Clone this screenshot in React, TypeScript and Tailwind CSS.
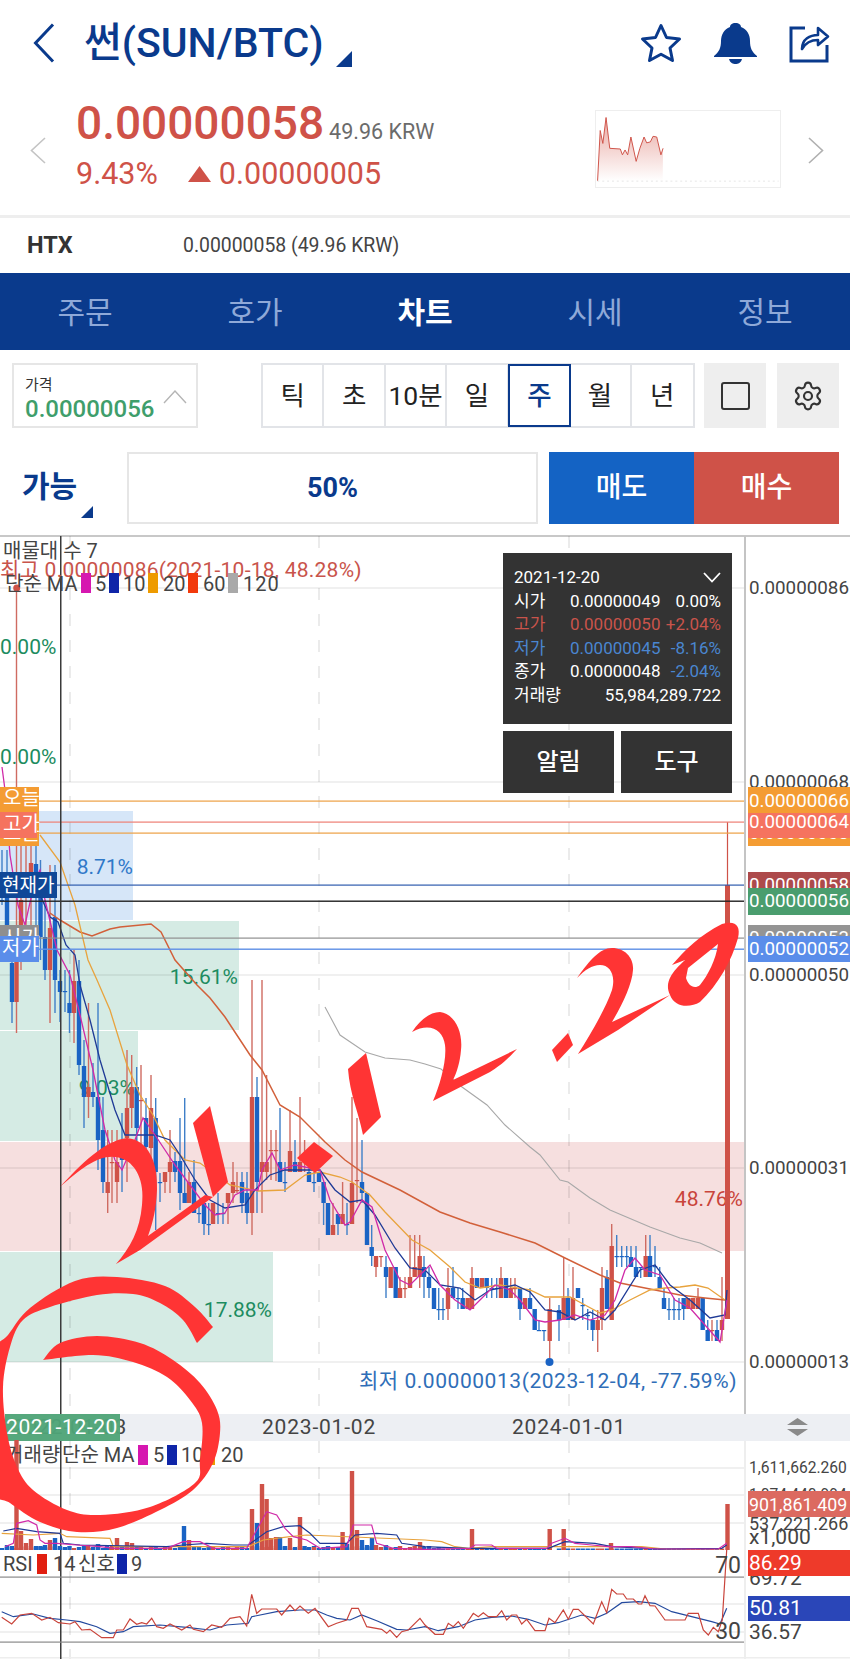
import React from "react";
import { Settings } from "lucide-react";

type P = [number, number];
const NAVY = "#0a3a8c";
const RED = "#cf5248";
const BLUE = "#1a63c4";
const HAND = "#ff3434";

const line = (p: P[]) => "M" + p.map((q) => `${q[0].toFixed(1)},${q[1].toFixed(1)}`).join("L");
const z7 = (p: number[][]): P[] => p.map(([a, b]) => [a / 3, 1400 + b / 3]);
const z8 = (p: number[][]): P[] => p.map(([a, b]) => [425 + a / 3, 1400 + b / 3]);

// open smooth curve (Catmull-Rom), continuing from the current point
const curve = (p: P[]) => {
  const n = p.length;
  let d = "";
  for (let i = 0; i < n - 1; i++) {
    const a = p[Math.max(i - 1, 0)], b = p[i], c = p[i + 1], e = p[Math.min(i + 2, n - 1)];
    const c1: P = [b[0] + (c[0] - a[0]) / 6, b[1] + (c[1] - a[1]) / 6];
    const c2: P = [c[0] - (e[0] - b[0]) / 6, c[1] - (e[1] - b[1]) / 6];
    d += `C${c1[0].toFixed(1)},${c1[1].toFixed(1)} ${c2[0].toFixed(1)},${c2[1].toFixed(1)} ${c[0]},${c[1]}`;
  }
  return d;
};

const CANDLES: number[][] = [
  [2,900,901,850,905,0],[7,893,925,850,935,0],[12,963,1002,940,1023,0],[16.5,962,1002,590,1033,1],[21,900,925,820,970,1],
  [26,880,890,820,950,1],[31,863,883,820,925,1],[36,864,883,830,925,0],[40.5,893,937,860,960,0],[45,937,970,900,980,0],
  [50,928,970,865,1023,1],[55,917,980,865,1013,0],[60,981,992,970,1022,0],[65,991,992,970,1012,0],[69.5,1003,1013,970,1033,0],
  [74,981,1013,950,1043,1],[79,981,1065,960,1075,0],[84,1066,1097,1040,1128,0],[88.5,1087,1097,1003,1118,1],[93,1092,1097,1063,1107,0],
  [98,1097,1140,1003,1170,0],[103,1130,1182,1097,1193,0],[107.7,1182,1193,1130,1213,1],[112,1162,1163,1130,1203,1],[117,1162,1182,1130,1203,1],
  [122,1157,1160,1113,1192,0],[127,1108,1138,1050,1182,1],[131.7,1087,1108,1055,1128,1],[136.7,1087,1128,1067,1150,0],[141,1100,1101,1065,1145,1],
  [146,1118,1147,1098,1165,0],[151,1108,1148,1075,1160,1],[155.7,1118,1172,1098,1230,0],[160,1182,1183,1173,1202,0],[165,1172,1182,1172,1193,1],
  [170,1162,1172,1130,1193,1],[175,1161,1172,1152,1182,0],[180,1161,1193,1118,1210,0],[184.7,1193,1203,1098,1203,0],[189,1182,1203,1172,1203,1],
  [194,1182,1213,1160,1213,0],[199,1213,1214,1203,1223,0],[204,1203,1224,1203,1235,0],[208.7,1224,1225,1203,1235,0],[213,1203,1224,1203,1224,1],
  [218,1213,1214,1193,1224,0],[223,1213,1214,1203,1224,0],[228,1193,1203,1193,1224,1],[233,1182,1193,1162,1203,1],[237,1190,1191,1172,1193,1],
  [242,1182,1203,1172,1213,0],[247,1193,1213,1172,1224,0],[252,1097,1213,980,1235,1],[257,1097,1182,1077,1213,0],[262,1162,1172,980,1213,1],
  [266.6,1162,1172,1075,1180,1],[271,1150,1151,1130,1180,1],[276,1150,1151,1130,1181,1],[280,1162,1182,1108,1182,0],[285,1182,1183,1162,1192,0],
  [290,1151,1172,1110,1172,1],[295,1162,1172,1140,1172,0],[300,1162,1172,1097,1172,1],[304.6,1160,1161,1140,1172,1],[309,1172,1182,1160,1182,0],
  [314,1182,1183,1172,1192,0],[319,1172,1182,1172,1182,0],[323.6,1182,1203,1182,1225,0],[328,1203,1235,1203,1235,0],[333,1225,1235,1203,1235,1],
  [338,1214,1224,1214,1235,0],[342.6,1214,1224,1182,1224,1],[347,1224,1225,1203,1235,0],[352,1183,1224,1097,1224,1],[357,1180,1181,1118,1203,1],
  [362,1182,1193,1140,1203,0],[367,1193,1245,1193,1245,0],[371.7,1247,1256,1225,1266,0],[376,1256,1267,1256,1277,1],[381,1256,1257,1256,1267,1],
  [386,1267,1277,1256,1298,0],[390.7,1267,1288,1267,1288,1],[395.7,1267,1298,1267,1298,0],[400,1288,1298,1277,1298,1],[405,1288,1289,1277,1298,1],
  [410,1277,1288,1235,1288,1],[414.7,1267,1277,1235,1277,1],[419.7,1256,1277,1235,1288,1],[424,1267,1277,1256,1298,0],[429,1277,1288,1267,1298,0],
  [434,1288,1309,1288,1309,0],[438.7,1309,1310,1288,1320,0],[443,1309,1310,1298,1320,0],[448,1288,1309,1268,1320,1],[453,1288,1298,1267,1298,0],
  [458,1298,1299,1288,1309,0],[462.7,1298,1309,1288,1309,0],[467.7,1298,1309,1298,1309,1],[472,1278,1309,1267,1309,1],[477,1278,1288,1278,1288,0],
  [482,1278,1288,1278,1288,1],[486.7,1278,1288,1278,1298,0],[491.7,1288,1289,1278,1298,0],[496.7,1288,1289,1278,1298,0],[501,1278,1298,1267,1298,1],
  [506,1278,1298,1278,1298,0],[510.7,1288,1298,1278,1298,1],[515,1288,1289,1278,1298,1],[520,1288,1309,1288,1320,0],[525,1298,1309,1298,1309,1],
  [530,1298,1309,1288,1309,0],[534.7,1309,1330,1309,1330,0],[539,1330,1331,1320,1330,0],[544,1330,1331,1330,1341,0],[549.7,1309,1341,1298,1362,1],
  [559,1310,1320,1305,1341,0],[563.7,1298,1320,1257,1320,1],[568,1298,1320,1288,1320,0],[573,1298,1320,1267,1320,1],[578,1288,1298,1288,1298,0],
  [582.7,1305,1306,1298,1320,0],[587.7,1315,1316,1309,1330,0],[592.7,1320,1330,1310,1341,0],[597.7,1320,1330,1310,1352,1],[602,1288,1320,1267,1330,1],
  [607,1277,1309,1270,1309,0],[611.7,1246,1320,1224,1320,1],[616.7,1256,1257,1235,1267,0],[621.7,1256,1257,1246,1267,0],[626.7,1256,1257,1246,1267,0],
  [631,1257,1267,1246,1267,0],[636,1267,1277,1246,1277,0],[640.7,1267,1268,1267,1278,0],[645.7,1256,1277,1235,1277,1],[650,1256,1277,1235,1277,0],
  [655,1266,1267,1246,1277,0],[659.7,1277,1288,1267,1288,0],[664,1298,1309,1288,1309,0],[669,1309,1310,1298,1320,0],[674,1309,1310,1298,1320,0],
  [679,1309,1310,1298,1320,0],[683.7,1298,1309,1298,1320,0],[688.3,1298,1309,1298,1309,1],[693,1298,1309,1298,1309,1],[698,1298,1309,1288,1309,1],
  [702.7,1298,1330,1298,1330,0],[707.7,1330,1341,1320,1341,0],[712,1330,1331,1320,1341,1],[717,1330,1341,1320,1341,0],[722,1320,1330,1277,1341,1],
];

const MA60: P[] = [[50,913],[60,920],[80,932],[92,936],[110,929],[120,927],[151,924],[161,932],[175,960],[197,985],[210,998],[225,1017],[250,1055],[262,1070],[280,1105],[300,1117],[325,1142],[345,1160],[362,1172],[400,1190],[440,1212],[470,1223],[500,1232],[535,1243],[565,1258],[600,1275],[620,1283],[650,1289],[680,1295],[705,1298],[725,1300]];
const MA120: P[] = [[325,1007],[340,1035],[365,1052],[385,1058],[410,1060],[425,1064],[441,1069],[462,1087],[487,1105],[505,1125],[530,1147],[540,1155],[560,1180],[568,1182],[590,1198],[610,1210],[650,1227],[680,1238],[700,1243],[722,1253]];
const MA20: P[] = [[40,835],[60,862],[75,905],[88,960],[97,980],[110,1010],[127,1065],[140,1095],[153,1115],[165,1140],[185,1160],[200,1163],[230,1185],[258,1191],[285,1190],[305,1175],[320,1172],[340,1177],[352,1182],[370,1195],[385,1212],[412,1240],[430,1250],[450,1267],[465,1282],[480,1288],[500,1285],[530,1290],[545,1297],[570,1297],[585,1305],[600,1313],[612,1310],[630,1300],[650,1290],[665,1288],[680,1287],[695,1285],[708,1288],[725,1300]];
const MA10: P[] = [[40,895],[50,917],[58,922],[66,945],[75,955],[80,985],[90,1020],[100,1060],[115,1110],[125,1135],[155,1135],[170,1140],[180,1155],[195,1180],[210,1200],[225,1208],[245,1205],[255,1190],[270,1175],[285,1170],[320,1170],[335,1190],[350,1202],[362,1200],[375,1215],[395,1248],[410,1268],[425,1270],[440,1285],[460,1288],[475,1300],[490,1290],[515,1285],[530,1292],[545,1310],[560,1312],[575,1320],[590,1312],[605,1320],[615,1310],[640,1270],[655,1265],[670,1285],[690,1300],[710,1318],[725,1315],[727,1290]];
const MA5: P[] = [[2,767],[5,790],[10,855],[18,905],[25,925],[35,880],[40,870],[45,900],[57,950],[70,975],[80,1015],[93,1070],[105,1130],[115,1160],[122,1170],[135,1140],[143,1118],[155,1135],[165,1150],[175,1165],[190,1185],[205,1205],[215,1215],[225,1213],[235,1195],[245,1190],[258,1190],[262,1170],[272,1153],[280,1170],[295,1165],[320,1170],[330,1200],[345,1225],[350,1222],[362,1200],[372,1207],[385,1250],[400,1280],[410,1285],[420,1275],[430,1265],[440,1285],[455,1300],[470,1310],[480,1300],[495,1285],[510,1290],[520,1300],[535,1320],[545,1322],[560,1320],[575,1315],[590,1320],[605,1315],[615,1300],[625,1270],[635,1258],[645,1270],[660,1275],[675,1300],[690,1308],[705,1325],[720,1342],[727,1300]];

const VOL: number[][] = [
  [7,1545,0],[16.5,1440,1],[21,1531,1],[26,1543,1],[31,1539,1],[36,1546,0],[41,1547,0],[45,1545,0],[50,1540,1],[55,1538,0],[60,1546,0],
  [88,1545,1],[98,1544,0],[107,1546,0],[117,1538,1],[127,1542,1],[132,1543,1],[122,1546,0],[184,1526,0],[189,1540,1],
  [252,1509,1],[257,1523,0],[262,1484,1],[266.6,1499,1],[271,1538,1],[276,1537,1],[280,1537,0],[285,1546,0],[290,1538,1],[295,1548,0],[300,1517,1],[304.6,1546,0],[314,1547,1],
  [342.6,1532,1],[347,1544,0],[352,1471,1],[357,1530,1],[362,1540,0],[367,1545,0],[372,1538,0],[376,1545,1],[386,1545,0],[420,1542,1],
  [472,1529,1],[549.7,1529,1],[563.7,1529,1],[611,1543,1],[727.5,1504,1],
];

const v5 = [...z7([[15,440],[40,430],[50,370],[85,362],[110,375],[120,420],[135,430],[170,430],[230,435],[300,440],[345,445],[500,445],[550,425],[600,425],[640,445],[740,445],[770,390],[800,335],[830,345],[855,385],[880,410],[920,420],[960,445],[1040,440],[1060,375],[1115,375],[1130,430],[1180,445],[1275,448]]), ...z8([[135,445],[150,435],[200,435],[215,445],[365,445],[380,430],[420,415],[450,430],[500,435],[550,440],[620,440],[690,447],[880,447],[905,430]])];
const v10 = [...z7([[10,393],[50,385],[110,395],[180,400],[190,430],[240,435],[500,440],[550,435],[620,430],[700,435],[745,435],[800,395],[850,380],[900,377],[930,400],[960,430],[1040,430],[1065,405],[1130,400],[1190,405],[1205,430],[1275,440]]), ...z8([[130,445],[370,445],[420,425],[510,430],[560,440],[700,447],[890,445],[905,435]])];
const v20 = [...z7([[5,400],[100,405],[180,400],[200,410],[330,415],[340,440],[560,440],[745,440],[790,420],[870,410],[920,405],[1275,420]]), ...z8([[50,425],[90,440],[130,445],[200,440],[500,440],[650,440],[720,447],[890,447]])];
const rsiRed = [...z7([[5,652],[35,672],[60,645],[95,640],[125,660],[150,652],[175,668],[210,672],[225,665],[245,690],[270,688],[305,713],[340,713],[350,690],[370,690],[390,657],[410,673],[425,668],[440,672],[455,655],[470,680],[490,685],[510,672],[545,690],[570,675],[580,688],[610,695],[635,675],[665,682],[690,655],[720,650],[740,678],[755,583],[770,640],[785,627],[830,627],[845,645],[870,615],[885,632],[900,618],[925,640],[945,625],[985,680],[1010,670],[1040,660],[1055,625],[1075,625],[1100,680],[1145,688],[1160,700],[1170,690],[1190,712],[1205,695],[1225,690],[1260,655],[1275,675]]), ...z8([[30,703],[55,703],[70,670],[85,680],[100,665],[115,685],[145,640],[160,650],[175,638],[190,650],[215,650],[230,632],[245,660],[260,645],[275,645],[290,672],[305,658],[330,692],[360,692],[372,655],[390,668],[415,630],[430,658],[445,628],[460,628],[505,672],[530,605],[545,638],[560,568],[575,582],[595,582],[605,597],[625,597],[640,612],[650,612],[660,587],[675,617],[690,618],[720,660],[780,660],[790,640],[820,640],[835,690],[850,705],[865,682],[880,695],[892,660],[905,450]])];
const rsiNavy = [...z7([[5,635],[40,650],[100,642],[150,655],[200,660],[240,665],[290,680],[330,700],[370,695],[400,680],[480,675],[560,682],[630,690],[680,675],[745,670],[755,650],[830,635],[900,630],[945,630],[980,645],[1010,655],[1050,660],[1085,645],[1130,662],[1190,688],[1220,690],[1275,680]]), ...z8([[40,692],[100,680],[150,660],[200,652],[260,648],[310,658],[360,675],[400,668],[470,645],[510,655],[545,640],[590,608],[640,605],[690,610],[740,635],[800,650],[860,665],[885,672],[905,625]])];

const spiralOuter: P[] = [[213,1327],[195,1307],[165,1286],[117,1277],[75,1281],[30,1308],[8,1335],[-6,1353],[-12,1420],[-6,1490],[10,1503],[40,1522],[77,1532],[117,1528],[160,1510],[193,1490],[213,1463],[220,1433],[217,1410],[200,1383],[173,1360],[140,1343],[97,1336],[60,1343],[43,1360]];
const spiralInner: P[] = [[43,1360],[93,1355],[133,1362],[167,1377],[190,1400],[202,1423],[200,1460],[195,1483],[150,1507],[100,1515],[67,1510],[33,1490],[17,1467],[7,1433],[3,1387],[10,1347],[23,1320],[50,1307],[97,1295],[133,1294],[160,1303],[183,1320],[197,1343]];

const T = ({ x, y, s = 20, c = "#444", a, w, ls, children }: { x: number; y: number; s?: number; c?: string; a?: "end" | "middle"; w?: number; ls?: number; children: React.ReactNode }) => (
  <text x={x} y={y} fontSize={s} fill={c} textAnchor={a} fontWeight={w} letterSpacing={ls} dominantBaseline="central">{children}</text>
);

const AX = 18.8;

function Chart() {
  return (
    <svg className="absolute left-0 top-[-2px]" width={850} height={1124} viewBox="0 535 850 1124">
      {/* volume profile */}
      <rect x={0} y={811} width={133} height={109} fill="#d6e6f8" />
      <rect x={0} y={921} width={239} height={109} fill="#d5ebe4" />
      <rect x={0} y={1031} width={138} height={110} fill="#d5ebe4" />
      <rect x={0} y={1142} width={744} height={109} fill="#f6dfdf" />
      <rect x={0} y={1252} width={273} height={110} fill="#d5ebe4" />

      {/* grid */}
      {[588, 782, 975, 1168, 1362, 1468, 1495, 1523, 1604, 1632].map((y) => (
        <line key={y} x1={0} x2={744} y1={y} y2={y} stroke="#000" strokeOpacity={0.08} strokeWidth={1.5} />
      ))}
      {[70, 319, 569].map((x) => (
        <line key={x} x1={x} x2={x} y1={536} y2={1414} stroke="#000" strokeOpacity={0.08} strokeWidth={2} strokeDasharray="12 14" />
      ))}
      {[70, 319, 569].map((x) => (
        <line key={x} x1={x} x2={x} y1={1441} y2={1659} stroke="#000" strokeOpacity={0.08} strokeWidth={2} strokeDasharray="12 14" />
      ))}
      <rect x={744} y={536} width={2} height={878} fill="#c4c4c4" />
      <rect x={744} y={1441} width={2} height={218} fill="#eee" />
      <rect x={0} y={1657} width={850} height={1.5} fill="#eee" />

      {/* profile percents */}
      <T x={0} y={647} s={21} c="#1c8c60">0.00%</T>
      <T x={0} y={757} s={21} c="#1c8c60">0.00%</T>
      <T x={133} y={867} s={21} a="end" c="#2f78c8">8.71%</T>
      <T x={238} y={977} s={21} a="end" c="#1c8c60">15.61%</T>
      <T x={135} y={1088} s={21} a="end" c="#1c8c60">9.03%</T>
      <T x={743} y={1199} s={21} a="end" c="#c9443b">48.76%</T>
      <T x={272} y={1310} s={21} a="end" c="#1c8c60">17.88%</T>

      {/* candles */}
      {CANDLES.map(([x, t, b, wt, wb, k]) => (
        <g key={x}>
          <rect x={x - 0.7} y={wt} width={1.4} height={wb - wt} fill={k ? "#cf6b62" : "#3f7fc8"} />
          <rect x={x - 2.2} y={t} width={4.4} height={Math.max(b - t, 1.2)} fill={k ? RED : BLUE} />
        </g>
      ))}
      <rect x={725} y={885} width={5} height={434} fill={RED} />
      <rect x={726.9} y={822} width={1.2} height={64} fill={RED} />
      <circle cx={16.7} cy={588} r={3.5} fill={RED} />
      <circle cx={549.5} cy={1362} r={4} fill={BLUE} />

      {/* moving averages */}
      <path d={line(MA120)} fill="none" stroke="#a8a8a8" strokeWidth={1.1} />
      <path d={line(MA60)} fill="none" stroke="#d2603a" strokeWidth={1.5} />
      <path d={line(MA20)} fill="none" stroke="#e8a33d" strokeWidth={1.3} />
      <path d={line(MA10)} fill="none" stroke="#1f3a96" strokeWidth={1.3} />
      <path d={line(MA5)} fill="none" stroke="#d02aa8" strokeWidth={1.3} />

      {/* price lines */}
      <rect x={0} y={800.5} width={744} height={1.2} fill="#eda043" />
      <rect x={0} y={821.5} width={744} height={1.2} fill="#ee7f74" />
      <rect x={0} y={832.5} width={744} height={1.2} fill="#eda043" />
      <rect x={0} y={884.5} width={744} height={1.2} fill="#2f5cae" />
      <rect x={0} y={900.5} width={744} height={1.4} fill="#222" />
      <rect x={0} y={937.5} width={744} height={1.2} fill="#8f8f8f" />
      <rect x={0} y={948.5} width={744} height={1.4} fill="#5f8fe6" />
      <rect x={60} y={536} width={1.5} height={1123} fill="#3a3a3a" />

      {/* indicator texts */}
      <T x={3} y={551}>매물대 수 7</T>
      <T x={0} y={570} s={21} ls={0.25} c="#c9544b">최고 0.00000086(2021-10-18, 48.28%)</T>
      <T x={5} y={584}>단순 MA</T>
      <rect x={81} y={573} width={10} height={20} fill="#d617b0" />
      <T x={95} y={584}>5</T>
      <rect x={109} y={573} width={10} height={20} fill="#0f25a8" />
      <T x={123} y={584}>10</T>
      <rect x={148} y={573} width={10} height={20} fill="#ee9b00" />
      <T x={163} y={584}>20</T>
      <rect x={188} y={573} width={10} height={20} fill="#f23a0c" />
      <T x={203} y={584}>60</T>
      <rect x={228} y={573} width={10} height={20} fill="#a9a9a9" />
      <T x={243} y={584} ls={1}>120</T>
      <T x={737} y={1381} s={21} ls={0.55} a="end" c="#2f6eb8">최저 0.00000013(2023-12-04, -77.59%)</T>

      {/* left tags */}
      <rect x={0} y={787} width={39} height={59} fill="#f49c33" />
      <T x={3} y={798} c="#fff">오늘</T>
      <T x={3} y={833} c="#fff">오늘</T>
      <rect x={0} y={812} width={37} height={26} fill="#f5735f" />
      <T x={3} y={824} c="#fff">고가</T>
      <rect x={0} y={872} width={57} height={26} fill="#0f4797" />
      <T x={2} y={885} s={19} c="#fff">현재가</T>
      <rect x={0} y={925} width={39} height={14} fill="#8f8f8f" />
      <T x={3} y={938} c="#fff">시가</T>
      <rect x={0} y={936} width={39} height={26} fill="#5a8dea" />
      <T x={2} y={948} c="#fff">저가</T>

      {/* axis */}
      {[["0.00000086", 588], ["0.00000068", 782], ["0.00000050", 975], ["0.00000031", 1168], ["0.00000013", 1362]].map(([t, y]) => (
        <T key={t} x={749} y={y as number} s={AX}>{t}</T>
      ))}
      <rect x={748} y={787} width={102} height={59} fill="#f49c33" />
      <T x={749} y={801} s={AX} c="#fff">0.00000066</T>
      <T x={749} y={833} s={AX} c="#fff">0.00000063</T>
      <rect x={748} y={813} width={102} height={25} fill="#f5735f" />
      <T x={749} y={822} s={AX} c="#fff">0.00000064</T>
      <rect x={748} y={872} width={102} height={24} fill="#ad4a4b" />
      <T x={749} y={885} s={AX} c="#fff">0.00000058</T>
      <rect x={748} y={888} width={102} height={27} fill="#4a9d6e" />
      <T x={749} y={901} s={AX} c="#fff">0.00000056</T>
      <rect x={748} y={925} width={102} height={14} fill="#949494" />
      <T x={749} y={938} s={AX} c="#fff">0.00000053</T>
      <rect x={748} y={936} width={102} height={26} fill="#5a8dea" />
      <T x={749} y={949} s={AX} c="#fff">0.00000052</T>

      {/* date bar */}
      <rect x={0} y={1414} width={850} height={27} fill="#edeff3" />
      <T x={127} y={1427} s={21} ls={0.8} a="end">2022-01-03</T>
      <T x={319} y={1427} s={21} ls={0.8} a="middle">2023-01-02</T>
      <T x={569} y={1427} s={21} ls={0.8} a="middle">2024-01-01</T>
      <rect x={5} y={1414} width={115} height={27} fill="#4fa478" fillOpacity={0.96} />
      <T x={6} y={1427} s={21} ls={0.6} c="#fff">2021-12-20</T>
      <path d="M787 1425L797.5 1418L808 1425ZM787 1429L808 1429L797.5 1436Z" fill="#8a8a8a" />

      {/* volume */}
      {CANDLES.map(([x, , , , , k], i) => (
        <rect key={x} x={x - 2.2} y={x > 440 ? 1548.5 : 1550 - 2 - (i * 7) % 3} width={4.4} height={x > 440 ? 1.5 : 2 + (i * 7) % 3} fill={k ? RED : BLUE} />
      ))}
      {VOL.map(([x, top, k]) => (
        <rect key={x} x={x - 2.2} y={top} width={4.4} height={1550 - top} fill={k ? RED : BLUE} />
      ))}
      <path d={line(v20)} fill="none" stroke="#e8a33d" strokeWidth={1.2} />
      <path d={line(v10)} fill="none" stroke="#1f3a96" strokeWidth={1.2} />
      <path d={line(v5)} fill="none" stroke="#d02aa8" strokeWidth={1.2} />
      <T x={5} y={1455}>거래량</T>
      <T x={62} y={1455}>단순 MA</T>
      <rect x={138} y={1445} width={10} height={20} fill="#d617b0" />
      <T x={153} y={1455}>5</T>
      <rect x={167} y={1445} width={10} height={20} fill="#0f25a8" />
      <T x={181} y={1455}>10</T>
      <rect x={205} y={1445} width={10} height={20} fill="#ee9b00" />
      <T x={221} y={1455}>20</T>
      <T x={749} y={1468} s={15.6}>1,611,662.260</T>
      <T x={749} y={1495} s={15.6}>1,074,440.994</T>
      <T x={749} y={1523} s={18}>537,221.266</T>
      <rect x={748} y={1491} width={102} height={26} fill="#dc6a60" />
      <T x={749} y={1504} s={17.8} c="#fff">901,861.409</T>
      <T x={749} y={1537} s={21}>x1,000</T>

      {/* rsi */}
      <rect x={0} y={1576.5} width={744} height={1.2} fill="#8a8a8a" />
      <rect x={0} y={1641.5} width={744} height={1.2} fill="#8a8a8a" />
      <path d={line(rsiNavy)} fill="none" stroke="#244a9e" strokeWidth={1.2} />
      <path d={line(rsiRed)} fill="none" stroke="#c9443b" strokeWidth={1.2} />
      <T x={3} y={1564}>RSI</T>
      <rect x={37} y={1554} width={10} height={20} fill="#e11f10" />
      <T x={53} y={1564}>14</T>
      <T x={78} y={1564}>신호</T>
      <rect x={117} y={1554} width={10} height={20} fill="#0f25a8" />
      <T x={131} y={1564}>9</T>
      <T x={741} y={1565} s={23} a="end">70</T>
      <T x={741} y={1631} s={23} a="end">30</T>
      <T x={749} y={1578} s={21}>69.72</T>
      <rect x={748} y={1550} width={102} height={26} fill="#ee3a2a" />
      <T x={749} y={1563} s={21} c="#fff">86.29</T>
      <rect x={748} y={1596} width={102} height={25} fill="#2a46b8" />
      <T x={749} y={1608} s={21} c="#fff">50.81</T>
      <T x={749} y={1632} s={21}>36.57</T>

      {/* handwriting */}
      <g fill={HAND}>
        <path d="M60,1187C80,1165 105,1140 127,1138C150,1140 158,1165 157,1190C156,1210 153,1222 148,1236L205,1195L213,1197L140,1250L116,1264C130,1248 140,1230 142,1205C145,1180 135,1165 125,1160C105,1150 85,1165 60,1187Z" />
        <path d="M193,1123L210,1106L228,1182L213,1197Z" />
        <path d="M297,1158L314,1142L333,1156L315,1173Z" />
        <path d="M348,1069L366,1053L381,1117L363,1135C358,1110 350,1095 348,1069Z" />
        <path d="M412,1032C420,1020 430,1012 440,1012C455,1014 463,1032 461,1050C460,1062 457,1072 453,1080L517,1049C505,1062 498,1067 490,1072L433,1101C440,1085 447,1060 445,1045C443,1030 430,1022 412,1032Z" />
        <path d="M552,1050L568,1033L573,1045L557,1062Z" />
        <path d="M577,978C590,960 600,948 612,948C625,948 634,958 633,970C632,985 622,1005 612,1022L670,995L618,1030L578,1054C590,1035 605,1010 612,990C616,975 610,965 600,965C592,965 585,970 577,978Z" />
        <path fillRule="evenodd" d="M672,965C685,950 700,935 722,924C735,920 741,925 738,938C732,960 718,985 700,1002C690,1008 675,1008 670,995C664,982 672,972 685,960ZM688,968L718,944C716,960 708,975 700,985C694,990 688,985 686,978Z" />
        <path d={`M213,1327${curve(spiralOuter)}${curve(spiralInner)}Z`} />
      </g>
    </svg>
  );
}

const TABS = ["틱", "초", "10분", "일", "주", "월", "년"];
const NAV = ["주문", "호가", "차트", "시세", "정보"];
const miniPts = ([[1100,545],[1105,390],[1110,430],[1116,350],[1123,445],[1143,447],[1147,465],[1152,450],[1157,465],[1163,410],[1173,485],[1180,445],[1188,410],[1193,428],[1200,425],[1205,408],[1212,410],[1220,465],[1224,445]] as number[][]).map(([a, b]) => [a / 1.845 - 596, b / 3 - 110] as P);

const ROWS: [string, string, string, string, string][] = [
  ["시가", "0.00000049", "0.00%", "text-white", "text-white"],
  ["고가", "0.00000050", "+2.04%", "text-[#c9544b]", "text-[#c9544b]"],
  ["저가", "0.00000045", "-8.16%", "text-[#4a86d0]", "text-[#4a86d0]"],
  ["종가", "0.00000048", "-2.04%", "text-white", "text-[#4a86d0]"],
];

export default function App() {
  return (
    <div className="relative w-[850px] h-[1659px] overflow-hidden bg-white [font-family:Roboto,'Noto_Sans_CJK_KR',sans-serif]">
      {/* title */}
      <div className="flex items-center h-[86px] pl-[33px] pr-[20px]">
        <svg width="22" height="40" viewBox="0 0 22 40" fill="none" stroke={NAVY} strokeWidth="3">
          <path d="M20 1.5L2.5 20L20 38.5" />
        </svg>
        <div className="ml-[29px] flex items-end">
          <span className="text-[41px] leading-[46px] text-[#0a3a8c] font-medium whitespace-nowrap">썬(SUN/BTC)</span>
          <svg className="ml-[12px] mb-[-1px]" width="16" height="16" viewBox="0 0 16 16"><path d="M16 0V16H0Z" fill={NAVY} /></svg>
        </div>
        <div className="ml-auto flex items-center gap-[32px]">
          <svg width="42" height="40" viewBox="0 0 42 40" fill="none" stroke={NAVY} strokeWidth="3" strokeLinejoin="round">
            <path d="M21 2.5L26.5 14.5L39.5 16L30 25L32.5 37.5L21 31.2L9.5 37.5L12 25L2.5 16L15.5 14.5Z" />
          </svg>
          <svg width="43" height="41" viewBox="0 0 43 41" fill={NAVY}>
            <path d="M21.5 0C25 0 27 2 27 4C33 6 36 12 36 18C36 25 38 29 43 33V34H0V33C5 29 7 25 7 18C7 12 10 6 16 4C16 2 18 0 21.5 0Z" />
            <path d="M15 36H28C27 40 24 41 21.5 41C19 41 16 40 15 36Z" />
          </svg>
          <svg width="41" height="39" viewBox="0 0 41 39" fill="none" stroke={NAVY} strokeWidth="3">
            <path d="M16 4H2V37H38V21" />
            <path d="M13 25C13 15 21 11 29 11V4L39 12.5L29 21V16C22 16 17 18 13 25Z" strokeWidth="2.6" strokeLinejoin="round" />
          </svg>
        </div>
      </div>

      {/* price */}
      <div className="flex h-[132px] border-b-[3px] border-[#eee] pl-[30px] pr-[26px]">
        <svg className="mt-[51px]" width="16" height="27" viewBox="0 0 16 27" fill="none" stroke="#c4c4c4" strokeWidth="1.6"><path d="M15 1L1.5 13.5L15 26" /></svg>
        <div className="ml-[30px] flex flex-col">
          <div className="flex items-baseline mt-[11px]">
            <span className="text-[46px] leading-[52px] font-medium text-[#cf5248]">0.00000058</span>
            <span className="ml-[5px] text-[21.5px] text-[#6b6b6b]">49.96 KRW</span>
          </div>
          <div className="flex items-center mt-[8px] text-[30.5px] leading-[34px] text-[#cf5248]">
            <span>9.43%</span>
            <svg className="ml-[30px] mr-[8px]" width="23" height="16" viewBox="0 0 23 16"><path d="M11.5 0L23 16H0Z" fill={RED} /></svg>
            <span>0.00000005</span>
          </div>
        </div>
        <svg className="ml-auto mt-[24px] border border-[#eee]" width="186" height="78" viewBox="0 0 186 78">
          <defs>
            <linearGradient id="mg" x1="0" y1="0" x2="0" y2="1"><stop offset="0" stopColor="#e9a9a3" /><stop offset="1" stopColor="#fff" /></linearGradient>
          </defs>
          <path d={line(miniPts) + "L67,72Z"} fill="url(#mg)" />
          <path d={line(miniPts)} fill="none" stroke="#cf5248" strokeWidth="1" />
          <line x1="0" x2="186" y1="72" y2="72" stroke="#e5e5e5" strokeDasharray="2 3" />
        </svg>
        <svg className="ml-[27px] mt-[51px]" width="16" height="27" viewBox="0 0 16 27" fill="none" stroke="#b0b0b0" strokeWidth="1.6"><path d="M1 1L14.5 13.5L1 26" /></svg>
      </div>

      {/* market */}
      <div className="flex items-center h-[55px] pl-[27px]">
        <span className="w-[156px] text-[23.5px] font-bold text-[#333]">HTX</span>
        <span className="text-[19.4px] text-[#444]">0.00000058 (49.96 KRW)</span>
      </div>

      {/* nav */}
      <div className="grid grid-cols-5 h-[77px] bg-[#0a3a8c] pt-[2px]">
        {NAV.map((n) => (
          <div key={n} className={n === "차트" ? "flex items-center justify-center text-[30px] font-bold text-white" : "flex items-center justify-center text-[30px] text-[#8fa9d8]"}>{n}</div>
        ))}
      </div>

      {/* controls */}
      <div className="flex h-[65px] mt-[13px] pl-[12px] pr-[11px]">
        <div className="relative w-[186px] border-2 border-[#e6e6e6] pl-[11px] pt-[10px]">
          <div className="text-[15px] leading-[20px] text-[#333]">가격</div>
          <div className="text-[24px] leading-[28px] font-medium text-[#3f9e6b]">0.00000056</div>
          <svg className="absolute right-[9px] top-[25px]" width="24" height="14" viewBox="0 0 24 14" fill="none" stroke="#b5b5b5" strokeWidth="1.4"><path d="M1 13L12 1L23 13" /></svg>
        </div>
        <div className="ml-[63px] grid grid-cols-7 w-[434px] border-2 border-[#e2e4e8]">
          {TABS.map((t, i) => (
            <div
              key={t}
              className={
                t === "주"
                  ? "flex items-center justify-center text-[26.5px] font-medium text-[#0a3a8c] outline-2 -outline-offset-1 outline-[#0a3a8c] z-10"
                  : i === 6
                    ? "flex items-center justify-center text-[26.5px] text-[#222]"
                    : "flex items-center justify-center text-[26.5px] whitespace-nowrap text-[#222] border-r-2 border-[#e2e4e8]"
              }
            >
              {t}
            </div>
          ))}
        </div>
        <div className="ml-[9px] flex w-[62px] items-center justify-center bg-[#eee]">
          <div className="w-[29px] h-[28px] rounded-[3px] border-2 border-[#333]" />
        </div>
        <div className="ml-[11px] flex w-[62px] items-center justify-center bg-[#eee]">
          <Settings size={32} strokeWidth={1.6} color="#333" />
        </div>
      </div>

      {/* order row */}
      <div className="flex h-[72px] mt-[24px] pl-[22px] pr-[11px]">
        <div className="relative w-[105px]">
          <span className="absolute left-0 top-[17px] text-[30px] leading-[36px] font-bold text-[#0a3a8c]">가능</span>
          <svg className="absolute left-[59px] top-[54px]" width="12" height="12" viewBox="0 0 12 12"><path d="M12 0V12H0Z" fill={NAVY} /></svg>
        </div>
        <div className="flex w-[411px] items-center justify-center border-2 border-[#e6e6e6] text-[27px] font-bold text-[#0a3a8c]">50%</div>
        <div className="ml-[11px] flex w-[145px] items-center justify-center bg-[#1463c4] text-[28px] font-medium text-white">매도</div>
        <div className="flex w-[145px] items-center justify-center bg-[#cf5248] text-[28px] font-medium text-white">매수</div>
      </div>

      {/* chart */}
      <div className="relative mt-[11px] h-[1124px] border-t-[2px] border-[#c8c8c8]">
        <Chart />
        <div className="absolute left-[503px] top-[16px] w-[229px]">
          <div className="h-[171px] bg-[#333] px-[11px] pt-[13px] text-[17px] leading-[23.5px] text-white">
            <div className="flex items-center justify-between">
              <span>2021-12-20</span>
              <svg width="18" height="11" viewBox="0 0 18 11" fill="none" stroke="#fff" strokeWidth="1.8"><path d="M1 1L9 9.5L17 1" /></svg>
            </div>
            {ROWS.map(([a, b, c, col, pc]) => (
              <div key={a} className={"grid grid-cols-[56px_90px_1fr] " + col}>
                <span>{a}</span>
                <span>{b}</span>
                <span className={"text-right " + pc}>{c}</span>
              </div>
            ))}
            <div className="flex justify-between">
              <span>거래량</span>
              <span>55,984,289.722</span>
            </div>
          </div>
          <div className="mt-[7px] grid grid-cols-2 gap-[7px]">
            <div className="flex h-[62px] items-center justify-center bg-[#333] text-[24px] font-medium text-white">알림</div>
            <div className="flex h-[62px] items-center justify-center bg-[#333] text-[24px] font-medium text-white">도구</div>
          </div>
        </div>
      </div>
    </div>
  );
}
